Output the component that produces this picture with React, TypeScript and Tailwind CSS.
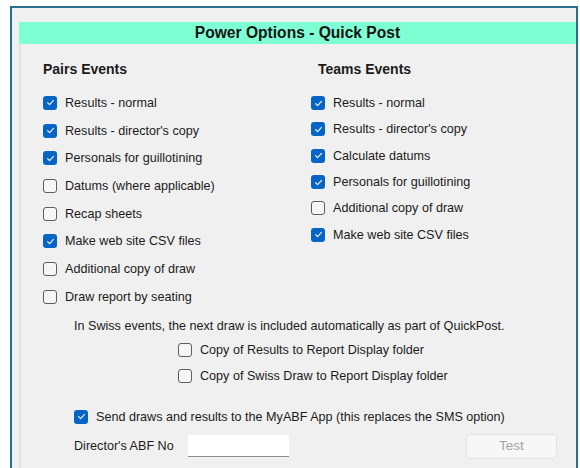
import React from "react";

type Item = { label: string; checked: boolean };

const pairs: Item[] = [
  { label: "Results - normal", checked: true },
  { label: "Results - director's copy", checked: true },
  { label: "Personals for guillotining", checked: true },
  { label: "Datums (where applicable)", checked: false },
  { label: "Recap sheets", checked: false },
  { label: "Make web site CSV files", checked: true },
  { label: "Additional copy of draw", checked: false },
  { label: "Draw report by seating", checked: false },
];

const teams: Item[] = [
  { label: "Results - normal", checked: true },
  { label: "Results - director's copy", checked: true },
  { label: "Calculate datums", checked: true },
  { label: "Personals for guillotining", checked: true },
  { label: "Additional copy of draw", checked: false },
  { label: "Make web site CSV files", checked: true },
];

function Box({ checked }: { checked: boolean }) {
  if (checked) {
    return (
      <span className="flex h-[14px] w-[14px] shrink-0 items-center justify-center rounded-[3px] bg-[#0664c6]">
        <svg width="9" height="9" viewBox="0 0 9 9" fill="none">
          <path d="M1.6 4.7 L3.6 6.6 L7.5 2.4" stroke="#ffffff" strokeWidth="1.1" strokeLinecap="round" strokeLinejoin="round" />
        </svg>
      </span>
    );
  }
  return <span className="h-[14px] w-[14px] shrink-0 rounded-[3px] border border-[#5e5e5e] bg-[#f6f6f6]" />;
}

function Row({ item, className }: { item: Item; className: string }) {
  return (
    <div className={`flex items-center gap-[8px] ${className}`}>
      <Box checked={item.checked} />
      <span className="whitespace-nowrap">{item.label}</span>
    </div>
  );
}

export default function App() {
  return (
    <div
      className="h-[468px] overflow-hidden bg-white pl-[10px] pr-[2px] pt-[6px] text-[12.6px] leading-[16px] text-[#1b1b1b]"
      style={{ fontFamily: '"Liberation Sans", Arial, sans-serif' }}
    >
      <div className="flex h-[462px] flex-col border-2 border-b-0 border-[#2d6d90] bg-[#f0f0f0] pl-[7px] pt-[14px]">
        <div className="flex h-[22px] shrink-0 items-center justify-center bg-[#7fffd4] text-[15.6px] font-bold text-[#151515]">
          Power Options - Quick Post
        </div>
        <div className="flex-1 border-l-2 border-[#e2e2e2] pl-[22px] pt-[17px]">
          <div className="flex">
            <div className="w-[268px]">
              <div className="h-[16px] text-[14px] font-bold leading-[16px]">Pairs Events</div>
              <div className="mt-[12px]">
                {pairs.map((p) => (
                  <Row key={p.label} item={p} className="h-[27.7px]" />
                ))}
              </div>
            </div>
            <div>
              <div className="h-[16px] pl-[7px] text-[14px] font-bold leading-[16px]">Teams Events</div>
              <div className="mt-[13px]">
                {teams.map((p) => (
                  <Row key={p.label} item={p} className="h-[26.3px]" />
                ))}
              </div>
            </div>
          </div>

          <div className="mt-[7px] pl-[31px]">
            <div className="h-[16px] whitespace-nowrap">
              In Swiss events, the next draw is included automatically as part of QuickPost.
            </div>
            <div className="mt-[3px] pl-[104px]">
              <Row item={{ label: "Copy of Results to Report Display folder", checked: false }} className="h-[26px]" />
              <Row item={{ label: "Copy of Swiss Draw to Report Display folder", checked: false }} className="h-[26px]" />
            </div>
            <Row
              item={{ label: "Send draws and results to the MyABF App (this replaces the SMS option)", checked: true }}
              className="mt-[15px] h-[26px]"
            />
            <div className="mt-[4px] flex h-[25px] items-center">
              <span className="w-[114px] whitespace-nowrap">Director's ABF No</span>
              <div className="h-[22px] w-[101px] border-b border-[#8c8c8c] bg-white" />
              <button className="ml-[177px] flex h-[25px] w-[91px] items-center justify-center rounded-[4px] border border-[#e3e3e3] bg-[#f7f7f7] text-[13.5px] text-[#a3a3a3]">
                Test
              </button>
            </div>
          </div>
        </div>
      </div>
    </div>
  );
}
